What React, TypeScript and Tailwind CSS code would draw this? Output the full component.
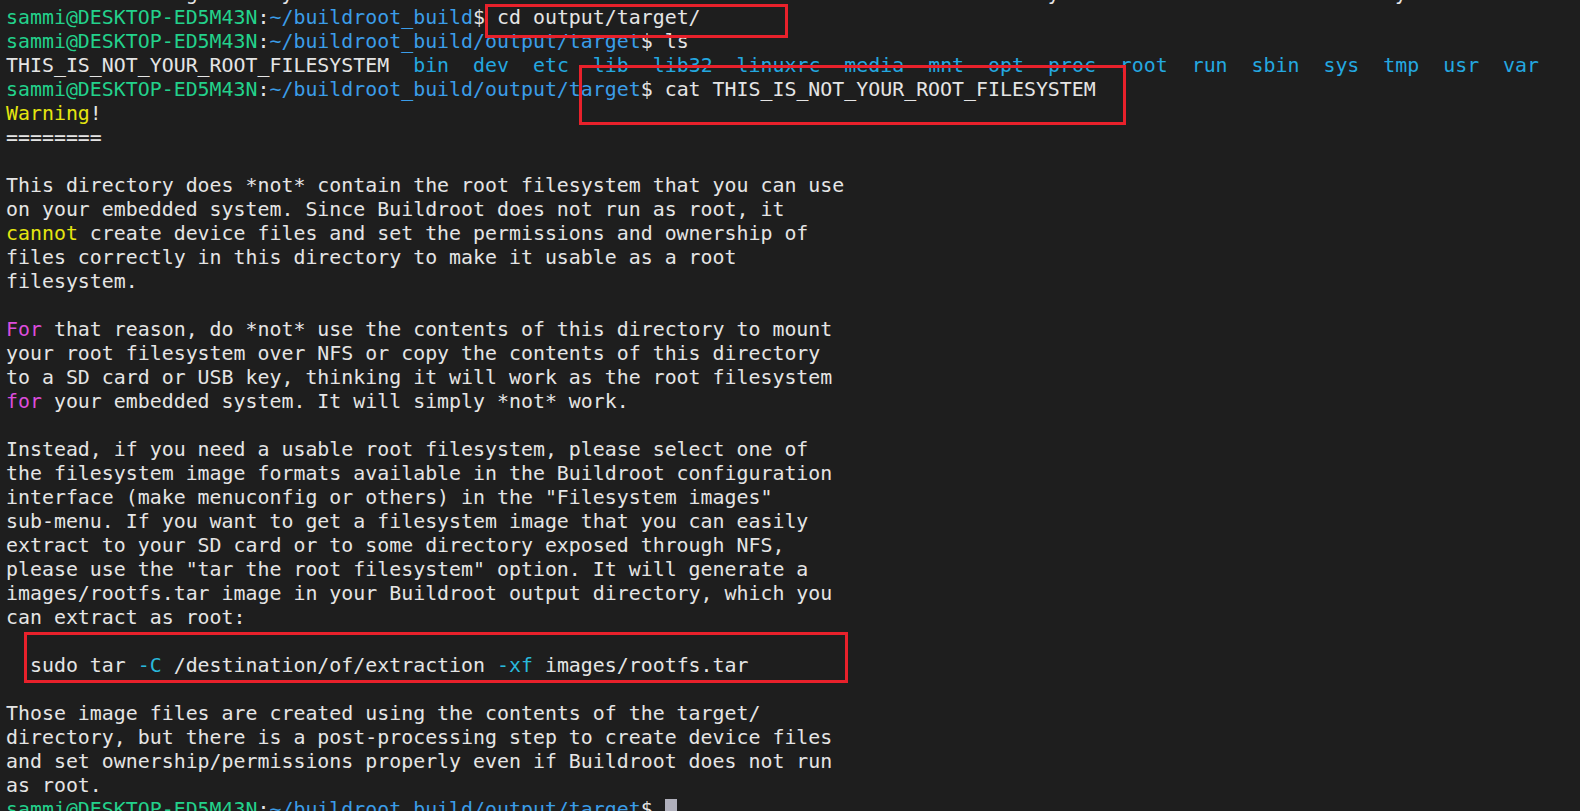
import React from "react";

type Seg = [string, string?];

const WHITE = "text-[#e5e5e5]";
const GREEN = "text-[#23d18b]";
const BLUE = "text-[#3b9de8]";
const LS = "text-[#24a8e0]";
const YELLOW = "text-[#e5e510]";
const MAGENTA = "text-[#dc4ddc]";
const CYAN = "text-[#29b8db]";

const prompt = (path: string): Seg[] => [
  ["sammi@DESKTOP-ED5M43N", GREEN],
  [":", WHITE],
  [path, BLUE],
  ["$ ", WHITE],
];

// only the descenders of the line above peek in at the top edge
const partial =
  " ".repeat(15) + "g" + " ".repeat(7) + "y" + " ".repeat(63) + "y" + " ".repeat(28) + "y";

const lsDirs = [
  "bin", "dev", "etc", "lib", "lib32", "linuxrc", "media", "mnt", "opt",
  "proc", "root", "run", "sbin", "sys", "tmp", "usr", "var",
];

const lines: Seg[][] = [
  [[partial]],
  [...prompt("~/buildroot_build"), ["cd output/target/"]],
  [...prompt("~/buildroot_build/output/target"), ["ls"]],
  [["THIS_IS_NOT_YOUR_ROOT_FILESYSTEM"], ...lsDirs.map((d): Seg => ["  " + d, LS])],
  [...prompt("~/buildroot_build/output/target"), ["cat THIS_IS_NOT_YOUR_ROOT_FILESYSTEM"]],
  [["Warning", YELLOW], ["!"]],
  [["========"]],
  [],
  [["This directory does *not* contain the root filesystem that you can use"]],
  [["on your embedded system. Since Buildroot does not run as root, it"]],
  [["cannot", YELLOW], [" create device files and set the permissions and ownership of"]],
  [["files correctly in this directory to make it usable as a root"]],
  [["filesystem."]],
  [],
  [["For", MAGENTA], [" that reason, do *not* use the contents of this directory to mount"]],
  [["your root filesystem over NFS or copy the contents of this directory"]],
  [["to a SD card or USB key, thinking it will work as the root filesystem"]],
  [["for", MAGENTA], [" your embedded system. It will simply *not* work."]],
  [],
  [["Instead, if you need a usable root filesystem, please select one of"]],
  [["the filesystem image formats available in the Buildroot configuration"]],
  [['interface (make menuconfig or others) in the "Filesystem images"']],
  [["sub-menu. If you want to get a filesystem image that you can easily"]],
  [["extract to your SD card or to some directory exposed through NFS,"]],
  [['please use the "tar the root filesystem" option. It will generate a']],
  [["images/rootfs.tar image in your Buildroot output directory, which you"]],
  [["can extract as root:"]],
  [],
  [
    ["  sudo tar "],
    ["-C", CYAN],
    [" /destination/of/extraction "],
    ["-xf", CYAN],
    [" images/rootfs.tar"],
  ],
  [],
  [["Those image files are created using the contents of the target/"]],
  [["directory, but there is a post-processing step to create device files"]],
  [["and set ownership/permissions properly even if Buildroot does not run"]],
  [["as root."]],
];

const Highlight = ({ className }: { className: string }) => (
  <div className={`absolute border-[3px] border-[#e8212b] ${className}`} />
);

export default function App() {
  return (
    <div className="relative w-full h-[811px] overflow-hidden bg-[#1e1e1e]">
      <div
        className="-mt-[18px] pl-[6px] text-[19.9px] leading-[24px] text-[#e5e5e5]"
        style={{ fontFamily: '"DejaVu Sans Mono", "Liberation Mono", monospace' }}
      >
        {lines.map((segs, i) => (
          <div key={i} className="h-[24px] whitespace-pre">
            {segs.map(([text, color], j) => (
              <span key={j} className={color ?? WHITE}>
                {text}
              </span>
            ))}
          </div>
        ))}
        <div className="h-[24px] whitespace-pre flex items-start">
          {prompt("~/buildroot_build/output/target").map(([text, color], j) => (
            <span key={j} className={color}>
              {text}
            </span>
          ))}
          <span className="inline-block w-[12px] h-[20px] mt-[1px] bg-[#b0b0bc]" />
        </div>
      </div>

      <Highlight className="left-[485px] top-[4px] w-[303px] h-[34px]" />
      <Highlight className="left-[579px] top-[65px] w-[547px] h-[60px]" />
      <Highlight className="left-[24px] top-[632px] w-[824px] h-[51px]" />
    </div>
  );
}
